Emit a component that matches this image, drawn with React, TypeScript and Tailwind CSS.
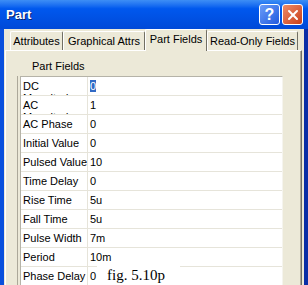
import { X } from "lucide-react";

const rows = [
  { label: ["DC", "Magnitude"], value: "0", selected: true },
  { label: ["AC", "Magnitude"], value: "1" },
  { label: ["AC Phase"], value: "0" },
  { label: ["Initial Value"], value: "0" },
  { label: ["Pulsed Value"], value: "10" },
  { label: ["Time Delay"], value: "0" },
  { label: ["Rise Time"], value: "5u" },
  { label: ["Fall Time"], value: "5u" },
  { label: ["Pulse Width"], value: "7m" },
  { label: ["Period"], value: "10m" },
  { label: ["Phase Delay"], value: "0" },
];

const tabs = [
  { name: "Attributes", w: "w-[53px]" },
  { name: "Graphical Attrs", w: "w-[82px]" },
  { name: "Part Fields", w: "w-[62px]", active: true },
  { name: "Read-Only Fields", w: "w-[91px]" },
];

function TitleBar() {
  return (
    <div className="h-[29px] shrink-0 flex items-center pl-[6px] pr-[5px] bg-gradient-to-b from-[#3d8ef5] via-[#0058ee] via-30% to-[#0049d8]">
      <span className="text-white font-bold text-[13px] leading-[15px] [text-shadow:1px_1px_0_#0a246a]">Part</span>
      <div className="ml-auto flex gap-[2px]">
        <div className="w-[21px] h-[21px] rounded-[3px] border border-white bg-gradient-to-br from-[#6a9cf8] to-[#2258de] flex items-center justify-center text-white font-bold text-[16px] leading-none">
          ?
        </div>
        <div className="w-[21px] h-[21px] rounded-[3px] border border-white bg-gradient-to-br from-[#ee8a66] to-[#c83d14] flex items-center justify-center text-white">
          <X size={16} strokeWidth={3} />
        </div>
      </div>
    </div>
  );
}

export default function App() {
  return (
    <div className="relative w-[308px] h-[285px] overflow-hidden flex flex-col font-['Liberation_Sans',Arial,sans-serif] text-[11px] text-black">
      <TitleBar />
      <div className="flex-1 flex flex-col bg-[#ece9d8] border-l-[4px] border-l-[#0a50dd] border-r-[4px] border-r-[#0a2ea6] overflow-hidden">
        <div className="h-[21px] shrink-0 flex items-end pl-[6px]">
          {tabs.map((t) =>
            t.active ? (
              <div
                key={t.name}
                className={`${t.w} h-[22px] -mb-px relative z-10 bg-[#ece9d8] border-t border-l border-white border-r border-r-[#716f64] rounded-t-[2px] pt-[3px] text-center leading-[13px]`}
              >
                {t.name}
              </div>
            ) : (
              <div
                key={t.name}
                className={`${t.w} h-[19px] bg-[#ece9d8] border-t border-l border-white border-r border-r-[#716f64] rounded-t-[2px] pt-[3px] text-center leading-[13px] whitespace-nowrap`}
              >
                {t.name}
              </div>
            )
          )}
        </div>
        <div className="flex-1 ml-[1px] mr-[2px] border-t border-l border-white border-r border-r-[#716f64] flex flex-col">
          <div className="flex-1 border-r border-r-[#aca899] flex flex-col pt-[9px]">
            <div className="pl-[26px] leading-[13px]">Part Fields</div>
            <div className="mt-[3px] ml-[11px] flex-1 border-l border-l-[#aca899] pl-[2px]">
              <div className="w-[263px] bg-white border-l border-t border-[#b5b3a8] border-r border-r-[#f5f4ee]">
                {rows.map((r) => (
                  <div key={r.label.join(" ")} className="h-[19px] flex border-b border-[#e6e4da]">
                    <div className="w-[67px] h-[18px] overflow-hidden pl-[2px] pt-[3px] leading-[12px] whitespace-nowrap border-r border-[#e6e4da]">
                      {r.label.map((l, i) => (
                        <div key={i}>{l}</div>
                      ))}
                    </div>
                    <div className="flex-1 pl-[2px] pt-[3px] leading-[12px]">
                      {r.selected ? <span className="bg-[#316ac5] text-white">{r.value}</span> : r.value}
                    </div>
                  </div>
                ))}
              </div>
            </div>
          </div>
        </div>
      </div>
      <div className="absolute left-[97px] top-[266px] w-[83px] h-[19px] bg-white pl-[10px] pt-[1px] font-['Liberation_Serif','Times_New_Roman',serif] text-[15px] leading-[17px]">
        fig. 5.10p
      </div>
    </div>
  );
}
